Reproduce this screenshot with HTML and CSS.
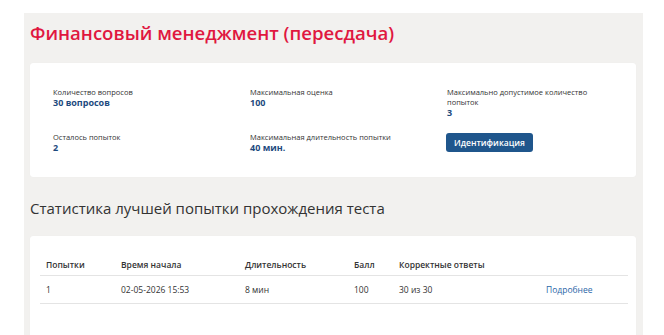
FILE: index.html
```html
<!DOCTYPE html>
<html lang="ru">
<head>
<meta charset="utf-8">
<link rel="stylesheet" href="styles.css">
</head>
<body>
<div class="panel">
  <h1 class="title">Финансовый менеджмент (пересдача)</h1>
  <div class="card info">
    <div class="item"><div class="label">Количество вопросов</div><div class="value">30 вопросов</div></div>
    <div class="item"><div class="label">Максимальная оценка</div><div class="value">100</div></div>
    <div class="item"><div class="label">Максимально допустимое количество попыток</div><div class="value">3</div></div>
    <div class="item"><div class="label">Осталось попыток</div><div class="value">2</div></div>
    <div class="item"><div class="label">Максимальная длительность попытки</div><div class="value">40 мин.</div></div>
    <div class="item"><button class="btn">Идентификация</button></div>
  </div>
  <h2 class="subtitle">Статистика лучшей попытки прохождения теста</h2>
  <div class="card stats">
    <table class="table">
      <colgroup>
        <col class="c1"><col class="c2"><col class="c3"><col class="c4"><col class="c5"><col class="c6">
      </colgroup>
      <thead>
        <tr><th>Попытки</th><th>Время начала</th><th>Длительность</th><th>Балл</th><th>Корректные ответы</th><th></th></tr>
      </thead>
      <tbody>
        <tr><td>1</td><td>02-05-2026 15:53</td><td>8 мин</td><td>100</td><td>30 из 30</td><td><a class="link" href="#">Подробнее</a></td></tr>
      </tbody>
    </table>
  </div>
</div>
</body>
</html>
```
FILE: styles.css
```css
html, body {
  margin: 0;
  padding: 0;
  background: #ffffff;
  font-family: "Open Sans", "Noto Sans", sans-serif;
}
.panel {
  margin-left: 24px;
  margin-top: 13px;
  width: 619px;
  height: 322px;
  background: #f2f1ef;
  padding: 0 0 0 6px;
  box-sizing: border-box;
  overflow: hidden;
}
.title {
  margin: 0;
  padding-top: 6px;
  height: 44px;
  font-size: 18.6px;
  line-height: 28px;
  font-weight: 600;
  color: #e0173f;
}
.card {
  width: 606px;
  background: #ffffff;
  border-radius: 3px;
  box-sizing: border-box;
  box-shadow: 0 0 1px rgba(0,0,0,0.06);
}
.info {
  display: grid;
  grid-template-columns: 197px 197px 189px;
  row-gap: 14px;
  padding: 24px 0 24px 23px;
}
.label {
  font-size: 7.5px;
  line-height: 10px;
  color: #333333;
  max-width: 160px;
}
.value {
  font-size: 9px;
  line-height: 11px;
  font-weight: 700;
  color: #1d4a7e;
}
.btn {
  display: block;
  width: 87px;
  height: 19px;
  margin: 1px 0 0 -1px;
  padding: 0;
  border: none;
  border-radius: 3px;
  background: #1f568c;
  color: #ffffff;
  font-family: "Open Sans", "Noto Sans", sans-serif;
  font-size: 8.5px;
  font-weight: 600;
}
.subtitle {
  margin: 0;
  padding-top: 21px;
  height: 38px;
  box-sizing: content-box;
  font-size: 15px;
  line-height: 20px;
  font-weight: 400;
  color: #333333;
}
.stats {
  padding: 18px 8px 30px 10px;
  height: 120px;
}
.table {
  width: 588px;
  border-collapse: collapse;
  table-layout: fixed;
  font-size: 8.5px;
  color: #333333;
}
.c1 { width: 75px; }
.c2 { width: 124px; }
.c3 { width: 109px; }
.c4 { width: 45px; }
.c5 { width: 147px; }
.c6 { width: 88px; }
.table th {
  text-align: left;
  font-weight: 600;
  padding: 0 0 0 6px;
  height: 21px;
  border-bottom: 1px solid #e4e4e4;
}
.table td {
  padding: 0 0 0 6px;
  height: 27px;
  border-bottom: 1px solid #e4e4e4;
}
.link {
  color: #2a66a8;
  text-decoration: none;
}
```
